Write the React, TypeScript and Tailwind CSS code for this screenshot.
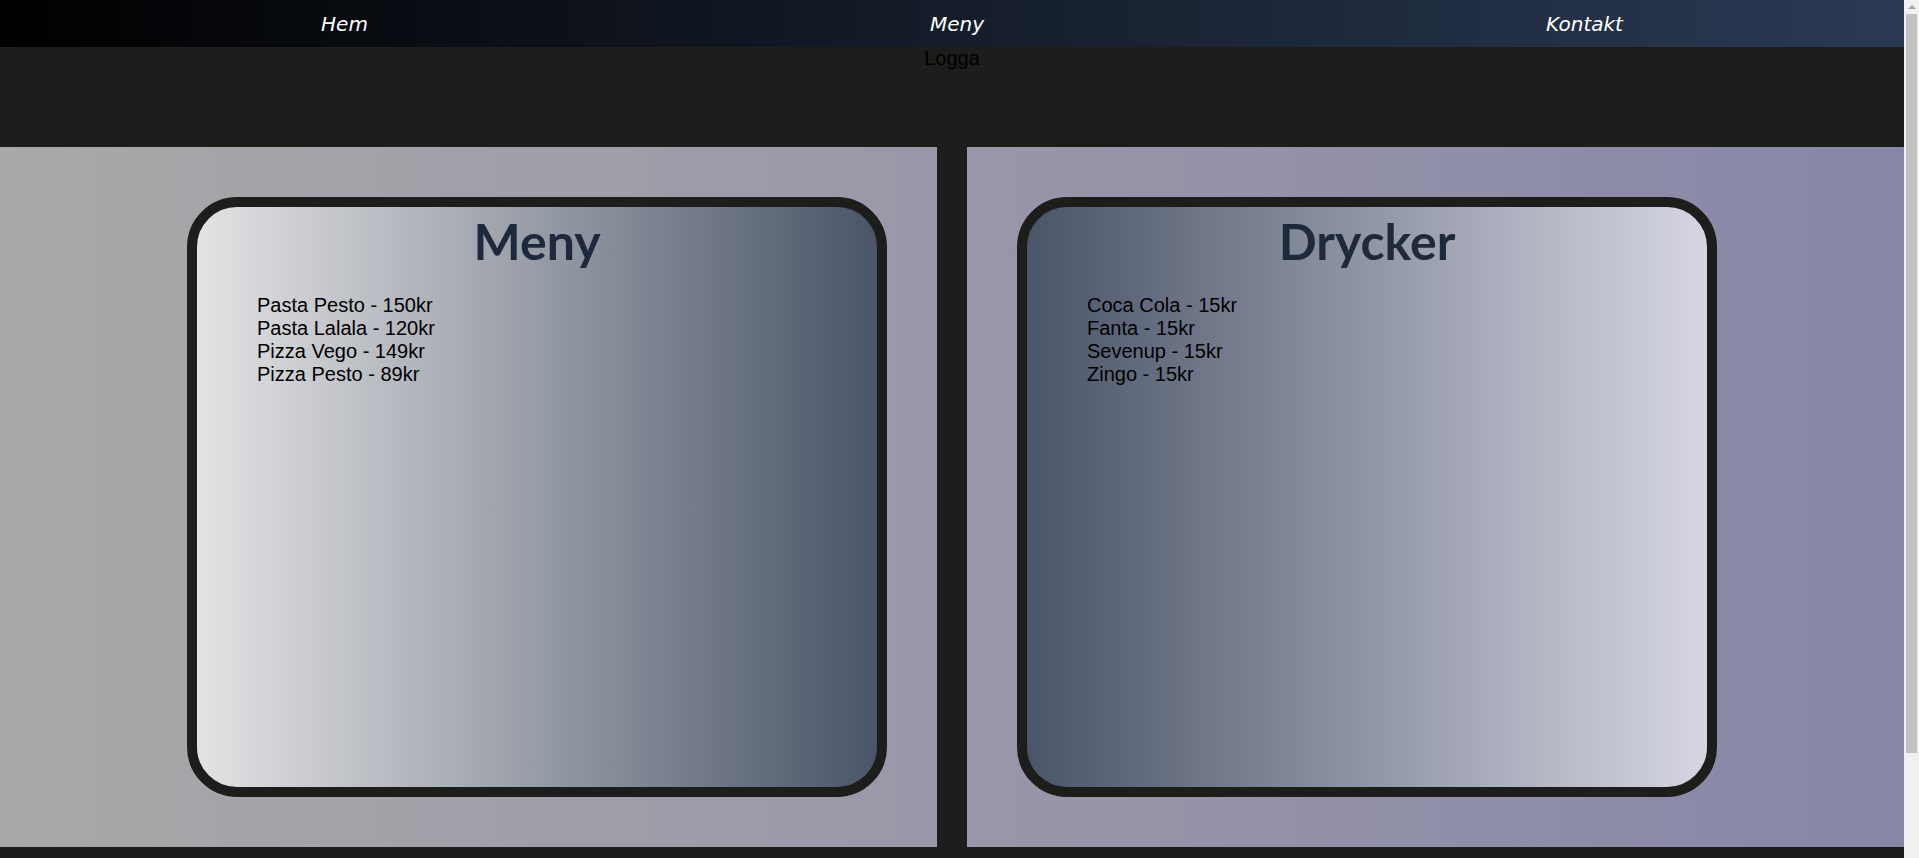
const navItems = ["Hem", "Meny", "Kontakt"];

const food = [
  "Pasta Pesto - 150kr",
  "Pasta Lalala - 120kr",
  "Pizza Vego - 149kr",
  "Pizza Pesto - 89kr",
];

const drinks = ["Coca Cola - 15kr", "Fanta - 15kr", "Sevenup - 15kr", "Zingo - 15kr"];

function MenuCard({
  title,
  items,
  reverse,
}: {
  title: string;
  items: string[];
  reverse?: boolean;
}) {
  return (
    <div
      className={
        reverse
          ? "w-[700px] h-[600px] border-[10px] border-[#1d1d1b] rounded-[50px] bg-linear-to-r/srgb from-[#4a5568] to-[#d6d6e2] px-5"
          : "w-[700px] h-[600px] border-[10px] border-[#1d1d1b] rounded-[50px] bg-linear-to-r/srgb from-[#e3e3e4] to-[#4a5568] px-5"
      }
    >
      <h1 className="text-center font-['Lato',sans-serif] text-[50px] font-bold leading-[69px] text-[#1e293b]">
        {title}
      </h1>
      <ul className="mt-[18px] pl-10 font-['Liberation_Sans',Arial,sans-serif] text-xl leading-[23px] text-black">
        {items.map((item) => (
          <li key={item}>{item}</li>
        ))}
      </ul>
    </div>
  );
}

// stand-in for the browser's vertical scrollbar seen in the screenshot
function Scrollbar() {
  return (
    <aside className="sticky top-0 flex h-screen w-[15px] shrink-0 flex-col items-center bg-[#f1f1f1]">
      <div className="flex h-[14px] items-center justify-center">
        <div className="h-0 w-0 border-x-[4px] border-b-[4px] border-x-transparent border-b-[#a3a3a3]" />
      </div>
      <div className="h-[739px] w-[11px] bg-[#c1c1c1]" />
    </aside>
  );
}

export default function App() {
  return (
    <div className="flex bg-[#1d1d1b]">
      <div className="min-w-0 flex-1">
        {/* Nav */}
        <nav className="h-[47px] bg-linear-to-r/srgb from-black to-[#2a3a55]">
          <ul className="flex h-full items-center justify-around pl-10 font-['DejaVu_Sans',Verdana,sans-serif] text-xl italic text-white">
            {navItems.map((item) => (
              <li key={item}>
                <a href="#">{item}</a>
              </li>
            ))}
          </ul>
        </nav>

        {/* Header */}
        <header className="h-[100px] text-center font-['Liberation_Sans',Arial,sans-serif] text-xl leading-[23px] text-black">
          Logga
        </header>

        {/* Menus */}
        <main className="grid grid-cols-[1fr_30px_1fr] bg-linear-to-r/srgb from-[#a9a9a9] to-[#8886a8]">
          <section className="flex justify-end p-[50px]">
            <MenuCard title="Meny" items={food} />
          </section>
          <div className="bg-[#1d1d1b]" />
          <section className="flex justify-start p-[50px]">
            <MenuCard title="Drycker" items={drinks} reverse />
          </section>
        </main>

        <footer className="h-[112px]" />
      </div>
      <Scrollbar />
    </div>
  );
}
